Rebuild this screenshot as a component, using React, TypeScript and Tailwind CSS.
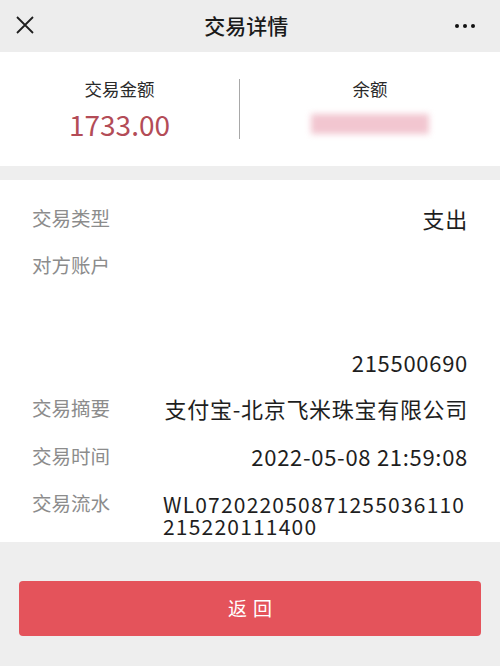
const font = "font-['Noto_Sans_CJK_SC','Noto_Sans',sans-serif]";

function Row({ label, children, className = "" }: { label: string; children?: React.ReactNode; className?: string }) {
  return (
    <div className={`flex h-[26px] items-center justify-between ${className}`}>
      <div className="shrink-0 text-[19.5px] leading-[26px] text-[#8c8c8c]">{label}</div>
      <div className="text-right text-[22px] leading-[26px] tracking-[0.7px] text-[#1e1e1e]">{children}</div>
    </div>
  );
}

export default function App() {
  return (
    <div className={`flex h-[666px] w-[500px] flex-col bg-[#eeeeee] ${font}`}>
      <div className="flex h-[52px] items-center justify-between bg-[#ededed] px-[16px]">
        <svg width="18" height="18" viewBox="0 0 18 18" className="mb-[2px]">
          <path d="M1 1 L17 17 M17 1 L1 17" stroke="#1f1f1f" strokeWidth="1.8" fill="none" />
        </svg>
        <div className="pl-[4px] text-[21px] font-medium text-[#1a1a1a]">交易详情</div>
        <div className="mr-[9px] flex gap-[3.5px]">
          <span className="h-[4.5px] w-[4.5px] rounded-full bg-[#111]" />
          <span className="h-[4.5px] w-[4.5px] rounded-full bg-[#111]" />
          <span className="h-[4.5px] w-[4.5px] rounded-full bg-[#111]" />
        </div>
      </div>

      <div className="flex h-[114px] items-center bg-white">
        <div className="flex w-[239px] flex-col items-center">
          <div className="text-[17.5px] leading-[24px] text-[#2a2a2a]">交易金额</div>
          <div className="mt-[6px] text-[28px] leading-[34px] text-[#b34c57]">1733.00</div>
        </div>
        <div className="h-[60px] w-px bg-[#a8a8a8]" />
        <div className="flex flex-1 flex-col items-center">
          <div className="text-[17.5px] leading-[24px] text-[#2a2a2a]">余额</div>
          <div className="mt-[13px] h-[20px] w-[118px] bg-[#f2c6d0] blur-[3px]" />
          <div className="h-[7px]" />
        </div>
      </div>

      <div className="mt-[14px] flex flex-col bg-white pb-[5px] pl-[32px] pr-[32px] pt-[25px]">
        <Row label="交易类型">支出</Row>
        <Row label="对方账户" className="mt-[21px]" />
        <div className="mt-[71px] text-right text-[22px] leading-[26px] tracking-[0.7px] text-[#1e1e1e]">215500690</div>
        <Row label="交易摘要" className="mt-[20px]">支付宝-北京飞米珠宝有限公司</Row>
        <Row label="交易时间" className="mt-[22px]">2022-05-08 21:59:08</Row>
        <div className="mt-[21px] flex items-start">
          <div className="w-[131px] shrink-0 text-[19.5px] leading-[26px] text-[#8c8c8c]">交易流水</div>
          <div className="flex flex-col pt-[3px] text-[21px] leading-[22px] tracking-[1.2px] text-[#1e1e1e]">
            <span>WL072022050871255036110</span>
            <span>215220111400</span>
          </div>
        </div>
      </div>

      <div className="px-[19px] pt-[39px]">
        <button className="flex h-[55px] w-full items-center justify-center rounded-[4px] bg-[#e4535b] pl-[6px] text-[19px] tracking-[6px] text-white">
          返回
        </button>
      </div>
    </div>
  );
}
